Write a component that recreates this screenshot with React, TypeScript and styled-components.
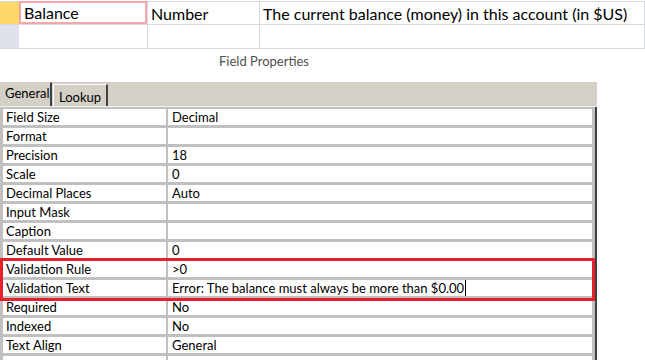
import React from "react";
import styled, { createGlobalStyle } from "styled-components";

const GlobalStyle = createGlobalStyle`
  html, body {
    margin: 0;
    padding: 0;
    background: #fff;
    overflow: hidden;
  }
  body {
    font-family: Lato, "Open Sans", sans-serif;
    color: #000;
  }
`;

interface Property {
  name: string;
  value: string;
  cursor?: boolean;
}

const properties: Property[] = [
  { name: "Field Size", value: "Decimal" },
  { name: "Format", value: "" },
  { name: "Precision", value: "18" },
  { name: "Scale", value: "0" },
  { name: "Decimal Places", value: "Auto" },
  { name: "Input Mask", value: "" },
  { name: "Caption", value: "" },
  { name: "Default Value", value: "0" },
  { name: "Validation Rule", value: ">0" },
  { name: "Validation Text", value: "Error: The balance must always be more than $0.00", cursor: true },
  { name: "Required", value: "No" },
  { name: "Indexed", value: "No" },
  { name: "Text Align", value: "General" },
  { name: "", value: "" },
];

const ROW_PITCH = 19;
const HIGHLIGHT_FROM = 8;
const HIGHLIGHT_COUNT = 2;

export default function App() {
  return (
    <>
      <GlobalStyle />
      <Page>
        <DesignGrid>
          <Selector $current />
          <Cell $selected>Balance</Cell>
          <Cell>Number</Cell>
          <Cell>The current balance (money) in this account (in $US)</Cell>
          <Selector />
          <Cell />
          <Cell />
          <Cell />
        </DesignGrid>

        <Caption>Field Properties</Caption>

        <PropertiesPanel>
          <TabStrip>
            <Tab $active>General</Tab>
            <Tab>Lookup</Tab>
          </TabStrip>
          <PropertyList>
            {properties.map((p, i) => (
              <PropertyRow key={i}>
                <NameCell>{p.name}</NameCell>
                <ValueCell>
                  {p.value}
                  {p.cursor && <Caret />}
                </ValueCell>
              </PropertyRow>
            ))}
            <Highlight
              style={{
                top: 2 + HIGHLIGHT_FROM * ROW_PITCH - 3,
                height: HIGHLIGHT_COUNT * ROW_PITCH + 5,
              }}
            />
          </PropertyList>
        </PropertiesPanel>
      </Page>
    </>
  );
}

const Page = styled.div`
  width: 645px;
  height: 360px;
  overflow: hidden;
`;

const DesignGrid = styled.div`
  margin-top: 1px;
  display: grid;
  grid-template-columns: 19px 129px 112px 1fr;
  grid-template-rows: 23px 24px;
  border-top: 1px solid #d5d9e2;
`;

const Selector = styled.div<{ $current?: boolean }>`
  background: ${(p) => (p.$current ? "#fdd868" : "#dfe2e8")};
  border-bottom: 1px solid #d5d9e2;
`;

const Cell = styled.div<{ $selected?: boolean }>`
  display: flex;
  align-items: center;
  padding: 0 3px;
  font-size: 16px;
  white-space: nowrap;
  overflow: hidden;
  border-right: 1px solid #d5d9e2;
  border-bottom: 1px solid #d5d9e2;
  ${(p) =>
    p.$selected &&
    `
    box-shadow: inset 0 0 0 2px #f4a6a9;
    padding-left: 5px;
    margin-top: -1px;
  `}
`;

const Caption = styled.div`
  height: 33px;
  padding-left: 219px;
  padding-top: 4px;
  box-sizing: border-box;
  font-size: 13px;
  color: #4f4f4f;
`;

const PropertiesPanel = styled.div`
  width: 597px;
`;

const TabStrip = styled.div`
  height: 24px;
  background: #d4d0c8;
  display: flex;
  align-items: flex-end;
  border-bottom: 1px solid #f4f3ef;
`;

const Tab = styled.div<{ $active?: boolean }>`
  box-sizing: border-box;
  height: ${(p) => (p.$active ? "24px" : "22px")};
  padding: ${(p) => (p.$active ? "2px 4px 0 4px" : "4px 5px 0 5px")};
  font-size: 13px;
  background: #d4d0c8;
  border-left: 1px solid ${(p) => (p.$active ? "#d4d0c8" : "#ffffff")};
  border-top: 1px solid ${(p) => (p.$active ? "#d4d0c8" : "#ffffff")};
  border-right: 2px solid #404040;
  margin-right: ${(p) => (p.$active ? "1px" : "0")};
  width: ${(p) => (p.$active ? "52px" : "55px")};
`;

const PropertyList = styled.div`
  position: relative;
  display: flex;
  flex-direction: column;
  gap: 3px;
  padding: 2px 3px 3px 3px;
  background: #c0c0c0;
  border-right: 2px solid #404040;
`;

const PropertyRow = styled.div`
  display: grid;
  grid-template-columns: 163px 1fr;
  column-gap: 2px;
  height: 16px;
`;

const NameCell = styled.div`
  background: #fff;
  padding-left: 3px;
  font-size: 13px;
  line-height: 16px;
  white-space: nowrap;
`;

const ValueCell = styled(NameCell)`
  padding-left: 4px;
  display: flex;
  align-items: center;
`;

const Caret = styled.span`
  display: inline-block;
  width: 1px;
  height: 16px;
  margin-left: 1px;
  background: #000;
`;

const Highlight = styled.div`
  position: absolute;
  left: 0;
  width: 595px;
  box-sizing: border-box;
  border: 3px solid #e8202a;
  pointer-events: none;
`;
